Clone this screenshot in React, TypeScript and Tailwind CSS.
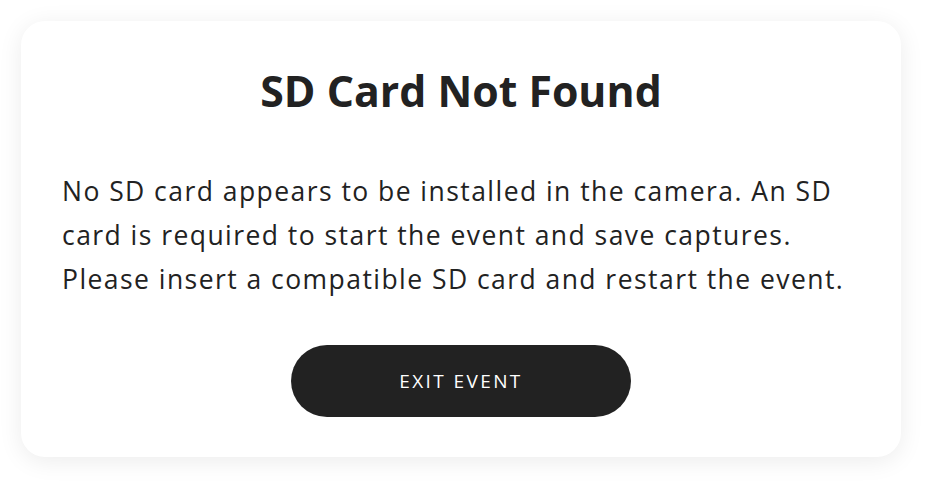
import React from "react";

export default function App() {
  return (
    <div className="w-[926px] h-[482px] bg-white flex flex-col" style={{ fontFamily: "'Open Sans', 'Noto Sans', sans-serif" }}>
      <div className="mx-[21px] mt-[21px] w-[880px] h-[436px] rounded-[24px] bg-white shadow-[0_4px_24px_rgba(0,0,0,0.08)] flex flex-col items-center">
        <h1 className="mt-[40px] text-[42.8px] leading-[60px] font-bold text-[#222222]">SD Card Not Found</h1>
        <p className="self-start ml-[41px] mt-[48px] text-[26.5px] leading-[44px] tracking-[1.45px] text-[#222222] text-left">
          No SD card appears to be installed in the camera. An SD<br />
          card is required to start the event and save captures.<br />
          Please insert a compatible SD card and restart the event.
        </p>
        <button className="mt-[44px] w-[340px] h-[72px] rounded-full bg-[#222222] text-white text-[19px] font-medium tracking-[2.4px]">EXIT EVENT</button>
      </div>
    </div>
  );
}
